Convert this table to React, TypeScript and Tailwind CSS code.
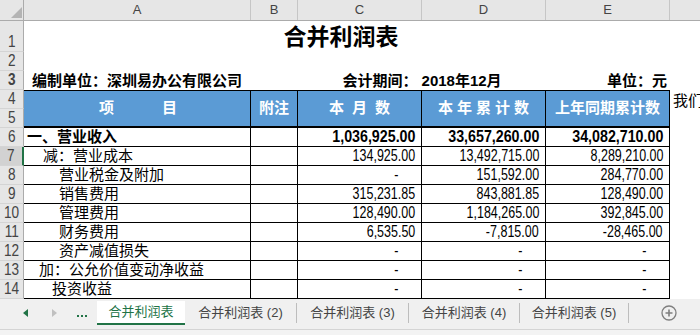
import React from "react";

const font = "font-['Liberation_Sans','Noto_Sans_CJK_SC',sans-serif]";

type Line = {
  n: number;
  label: string;
  indent: string;
  bold?: boolean;
  sel?: boolean;
  c: string;
  d: string;
  e: string;
};

const lines: Line[] = [
  { n: 6, label: "一、营业收入", indent: "pl-[3px]", bold: true, c: "1,036,925.00", d: "33,657,260.00", e: "34,082,710.00" },
  { n: 7, label: "减：营业成本", indent: "pl-[19px]", sel: true, c: "134,925.00", d: "13,492,715.00", e: "8,289,210.00" },
  { n: 8, label: "营业税金及附加", indent: "pl-[35px]", c: "-", d: "151,592.00", e: "284,770.00" },
  { n: 9, label: "销售费用", indent: "pl-[35px]", c: "315,231.85", d: "843,881.85", e: "128,490.00" },
  { n: 10, label: "管理费用", indent: "pl-[35px]", c: "128,490.00", d: "1,184,265.00", e: "392,845.00" },
  { n: 11, label: "财务费用", indent: "pl-[35px]", c: "6,535.50", d: "-7,815.00", e: "-28,465.00" },
  { n: 12, label: "资产减值损失", indent: "pl-[35px]", c: "-", d: "-", e: "-" },
  { n: 13, label: "加：公允价值变动净收益", indent: "pl-[15px]", c: "-", d: "-", e: "-" },
  { n: 14, label: "投资收益", indent: "pl-[28px]", c: "-", d: "-", e: "-" },
];

const tabs = [
  { name: "合并利润表 (2)", w: "w-[111px]" },
  { name: "合并利润表 (3)", w: "w-[111px]" },
  { name: "合并利润表 (4)", w: "w-[110px]" },
  { name: "合并利润表 (5)", w: "w-[108px]" },
];

function RowNum({ n, h = "h-[19px]", sel = false }: { n: number; h?: string; sel?: boolean }) {
  return (
    <div
      className={`flex w-[24px] shrink-0 items-end justify-center border-b border-b-[#d4d4d4] text-[#444] ${h} ${
        sel ? "border-r-2 border-r-[#217346] bg-[#d2d2d2]" : "border-r border-r-[#ababab] bg-[#e6e6e6]"
      }`}
    >
      <span className="inline-block scale-x-[0.8] text-[17px] leading-[18px]">{n}</span>
    </div>
  );
}

function HeadCell({ w, children }: { w: string; children: React.ReactNode }) {
  return (
    <div
      className={`flex h-[38px] shrink-0 items-center justify-center border-t border-r border-b-2 border-black bg-[#5b9bd5] text-[15px] font-bold text-white ${w}`}
    >
      {children}
    </div>
  );
}

function Num({ v, bold }: { v: string; bold?: boolean }) {
  return (
    <div
      className={`flex h-[19px] w-[124px] shrink-0 items-end justify-end border-r border-b border-black ${
        v === "-" ? "pr-[23px]" : "pr-[6px]"
      }`}
    >
      <span
        className={`inline-block origin-right text-[16px] leading-[18px] ${
          bold ? "scale-x-[0.89] font-bold" : "scale-x-[0.78]"
        }`}
      >
        {v}
      </span>
    </div>
  );
}

function ColHeader() {
  const cols = [
    { l: "A", w: "w-[227px]" },
    { l: "B", w: "w-[47px]" },
    { l: "C", w: "w-[124px]" },
    { l: "D", w: "w-[124px]" },
    { l: "E", w: "w-[124px]" },
  ];
  return (
    <div className="flex h-[21px] border-b border-[#ababab] bg-[#e6e6e6] text-[13px] text-[#444]">
      {/* corner */}
      <div className="flex w-[24px] shrink-0 items-end justify-end border-r border-[#ababab] pb-[2px] pr-[1px]">
        <div className="h-0 w-0 border-b-[11px] border-l-[11px] border-b-[#b4b4b4] border-l-transparent" />
      </div>
      {cols.map((c) => (
        <div key={c.l} className={`flex shrink-0 items-center justify-center border-r border-[#c6c6c6] ${c.w}`}>
          {c.l}
        </div>
      ))}
      <div className="flex-1" />
    </div>
  );
}

export default function App() {
  return (
    <div className={`h-[335px] w-[700px] overflow-hidden bg-white text-black ${font}`}>
      <ColHeader />

      {/* row 1: title */}
      <div className="flex h-[31px]">
        <RowNum n={1} h="h-[31px]" />
        <div className="flex w-[646px] items-end justify-center pb-[1px] pr-[12px] text-[23px] font-bold leading-[28px]">
          合并利润表
        </div>
      </div>

      {/* row 2 */}
      <div className="flex h-[19px]">
        <RowNum n={2} />
      </div>

      {/* row 3 */}
      <div className="flex h-[19px] text-[15px] font-bold leading-[18px]">
        <RowNum n={3} />
        <div className="flex w-[227px] items-end pl-[8px]">编制单位：深圳易办公有限公司</div>
        <div className="w-[47px]" />
        <div className="flex w-[248px] items-end justify-center">会计期间： 2018年12月</div>
        <div className="flex w-[124px] items-end justify-end pr-[3px]">单位：元</div>
      </div>

      {/* rows 4-5: header */}
      <div className="flex">
        <div className="flex flex-col">
          <RowNum n={4} />
          <RowNum n={5} />
        </div>
        <HeadCell w="w-[227px]">
          <span className="flex gap-[48px] pl-[2px]">
            <span>项</span>
            <span>目</span>
          </span>
        </HeadCell>
        <HeadCell w="w-[47px]">附注</HeadCell>
        <HeadCell w="w-[124px]">
          <span className="pl-[8px] tracking-[8px]">本月数</span>
        </HeadCell>
        <HeadCell w="w-[124px]">
          <span className="pl-[4px] tracking-[4px]">本年累计数</span>
        </HeadCell>
        <HeadCell w="w-[124px]">上年同期累计数</HeadCell>
        <div className="whitespace-nowrap pl-[3px] pt-[2px] text-[15px] leading-[18px]">我们</div>
      </div>

      {/* rows 6-14 */}
      {lines.map((r) => (
        <div key={r.n} className="flex h-[19px]">
          <RowNum n={r.n} sel={r.sel} />
          <div
            className={`flex h-[19px] w-[227px] shrink-0 items-end whitespace-nowrap border-r border-b border-black text-[15px] leading-[18px] ${r.indent} ${
              r.bold ? "font-bold" : ""
            }`}
          >
            {r.label}
          </div>
          <div className="h-[19px] w-[47px] shrink-0 border-r border-b border-black" />
          <Num v={r.c} bold={r.bold} />
          <Num v={r.d} bold={r.bold} />
          <Num v={r.e} bold={r.bold} />
        </div>
      ))}

      {/* sheet tabs */}
      <div className="flex h-[30px] items-start bg-[#f0f0f0] pt-[2px] text-[13px] text-[#444]">
        <div className="flex h-[24px] w-[97px] shrink-0 items-center">
          <div className="ml-[23px] h-0 w-0 border-y-[4px] border-r-[5px] border-y-transparent border-r-[#217346]" />
          <div className="ml-[24px] h-0 w-0 border-y-[4px] border-l-[5px] border-y-transparent border-l-[#c0c0c0]" />
          <div className="ml-[20px] flex gap-[2px] pt-[6px]">
            <span className="h-[2px] w-[2px] bg-[#217346]" />
            <span className="h-[2px] w-[2px] bg-[#217346]" />
            <span className="h-[2px] w-[2px] bg-[#217346]" />
          </div>
        </div>
        <div className="flex h-[24px] w-[88px] shrink-0 items-center justify-center border-b-2 border-[#217346] bg-white text-[#217346]">
          合并利润表
        </div>
        {tabs.map((t) => (
          <div key={t.name} className="flex h-[24px] shrink-0 items-center">
            <div className={`flex h-full items-center justify-center whitespace-nowrap ${t.w}`}>{t.name}</div>
            <div className="h-[20px] w-px bg-[#bdbdbd]" />
          </div>
        ))}
        <div className="flex h-[24px] items-center pl-[32px]">
          <svg width="16" height="16" viewBox="0 0 16 16" fill="none" stroke="#7f7f7f" strokeWidth="1.3">
            <circle cx="8" cy="8" r="7" />
            <path d="M8 4.5v7M4.5 8h7" strokeWidth="1.6" />
          </svg>
        </div>
      </div>

      {/* status bar */}
      <div className="flex h-[22px] items-start gap-[14px] border-t border-[#d4d4d4] bg-[#f3f3f3] pl-[6px] pt-[3px] text-[12px] text-[#444]">
        <span>就绪</span>
        <span>数字</span>
      </div>
    </div>
  );
}
